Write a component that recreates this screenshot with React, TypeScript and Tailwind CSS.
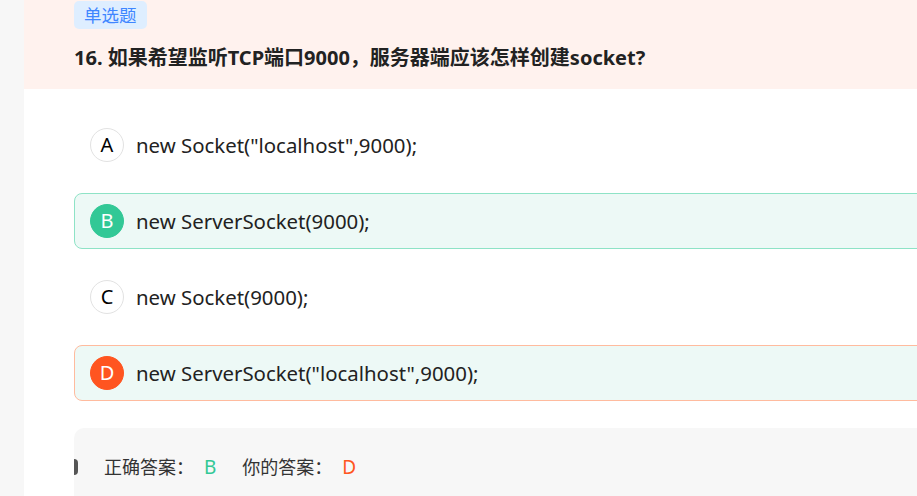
import React from "react";

const font = { fontFamily: '"Noto Sans", "Noto Sans CJK SC", sans-serif' };

type Opt = { letter: string; text: string; kind: "none" | "right" | "wrong" };

const options: Opt[] = [
  { letter: "A", text: 'new Socket("localhost",9000);', kind: "none" },
  { letter: "B", text: "new ServerSocket(9000);", kind: "right" },
  { letter: "C", text: "new Socket(9000);", kind: "none" },
  { letter: "D", text: 'new ServerSocket("localhost",9000);', kind: "wrong" },
];

function Option({ o }: { o: Opt }) {
  const box =
    o.kind === "right"
      ? "border-[#8ee3c6] bg-[#edf9f6]"
      : o.kind === "wrong"
      ? "border-[#ffbb9e] bg-[#edf9f6]"
      : "border-transparent bg-white";
  const circle =
    o.kind === "right"
      ? "bg-[#32c896] text-white border-[#32c896]"
      : o.kind === "wrong"
      ? "bg-[#ff5520] text-white border-[#ff5520]"
      : "bg-white text-black border-[#e2e2e2]";
  return (
    <div className={`flex items-center h-[56px] border rounded-[8px] pl-[15px] ${box}`}>
      <div
        className={`w-[34px] h-[34px] rounded-full border flex items-center justify-center text-[20px] shrink-0 ${circle}`}
      >
        {o.letter}
      </div>
      <div className="ml-[12px] text-[20.4px] text-[#222] leading-none">{o.text}</div>
    </div>
  );
}

export default function App() {
  return (
    <div className="w-[917px] h-[496px] overflow-hidden flex bg-[#f7f7f7]" style={font}>
      <div className="w-[24px] shrink-0" />
      <div className="w-[1000px] shrink-0 bg-white">
        <div className="h-[89px] bg-[#fff2ee] pl-[50px] pt-[1px]">
          <div className="inline-flex items-center h-[28px] px-[10px] rounded-[5px] bg-[#deeeff] text-[#3f86ff] text-[17.5px]">
            单选题
          </div>
          <div className="mt-[15px] text-[20px] leading-[28px] font-bold text-[#222]">
            16. 如果希望监听TCP端口9000，服务器端应该怎样创建socket?
          </div>
        </div>
        <div className="pl-[50px] pt-[28px] flex flex-col gap-[20px]">
          {options.map((o) => (
            <Option key={o.letter} o={o} />
          ))}
        </div>
        <div className="ml-[50px] mt-[27px] h-[100px] bg-[#f7f7f7] rounded-[10px] pt-[27px]">
          <div className="flex items-center h-[24px] text-[18px] text-[#333]">
            <div className="w-[4px] h-[16px] rounded-r-full bg-[#555]" />
            <span className="ml-[26px]">正确答案：</span>
            <span className="ml-[10px] text-[#32c896] text-[19px]">B</span>
            <span className="ml-[26px]">你的答案：</span>
            <span className="ml-[10px] text-[#ff5520] text-[19px]">D</span>
          </div>
        </div>
      </div>
    </div>
  );
}
